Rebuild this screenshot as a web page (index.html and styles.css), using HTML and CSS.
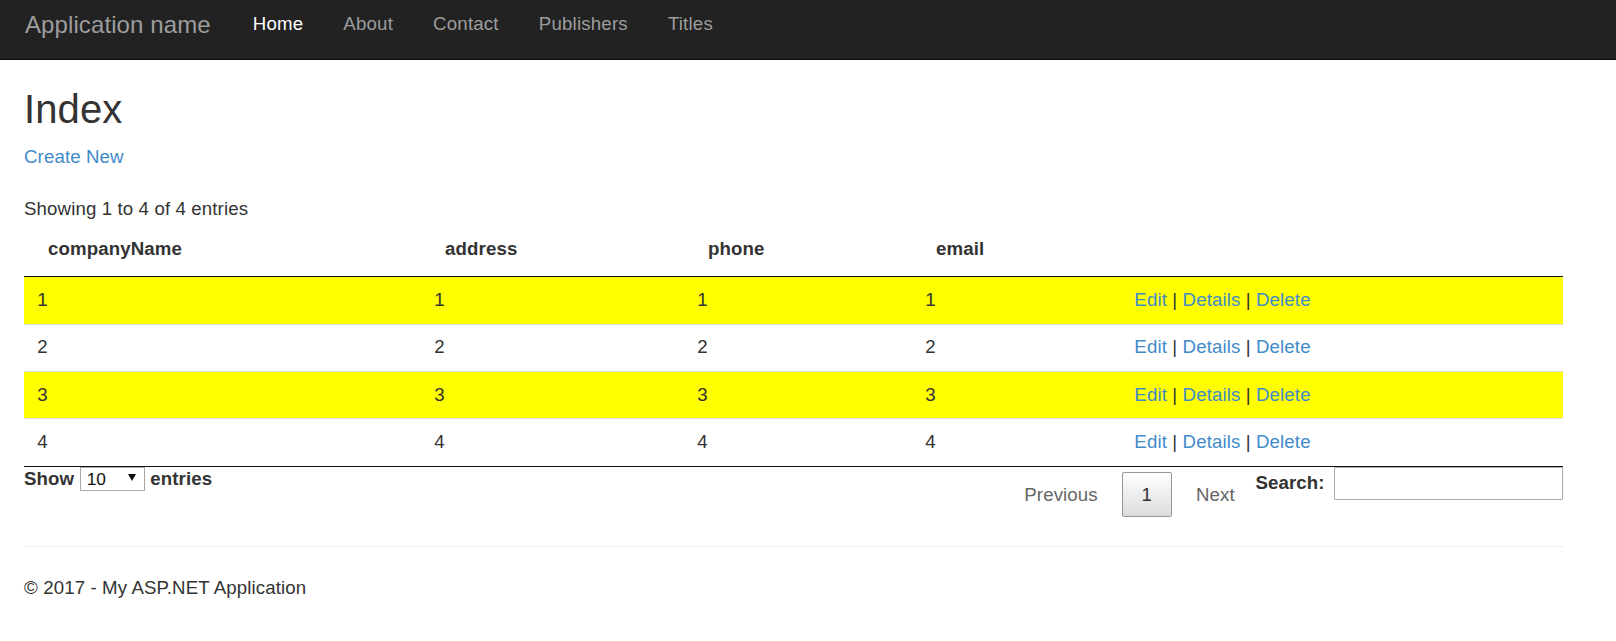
FILE: index.html
```html
<!DOCTYPE html>
<html lang="en">
<head>
<meta charset="utf-8">
<title>Index - My ASP.NET Application</title>
<link rel="stylesheet" href="styles.css">
</head>
<body>
<header class="navbar">
  <div class="navbar-inner">
    <a class="brand" href="#">Application name</a>
    <ul class="nav">
      <li><a class="nav-link active" href="#">Home</a></li>
      <li><a class="nav-link" href="#">About</a></li>
      <li><a class="nav-link" href="#">Contact</a></li>
      <li><a class="nav-link" href="#">Publishers</a></li>
      <li><a class="nav-link" href="#">Titles</a></li>
    </ul>
  </div>
</header>

<main class="container">
  <h2 class="page-title">Index</h2>
  <p class="create"><a href="#">Create New</a></p>

  <div class="dt-wrapper">
    <div class="dt-info">Showing 1 to 4 of 4 entries</div>
    <table class="dt-table">
      <thead>
        <tr>
          <th class="c1">companyName</th>
          <th class="c2">address</th>
          <th class="c3">phone</th>
          <th class="c4">email</th>
          <th class="c5"></th>
        </tr>
      </thead>
      <tbody>
        <tr class="odd">
          <td>1</td><td>1</td><td>1</td><td>1</td>
          <td><a href="#">Edit</a> | <a href="#">Details</a> | <a href="#">Delete</a></td>
        </tr>
        <tr class="even">
          <td>2</td><td>2</td><td>2</td><td>2</td>
          <td><a href="#">Edit</a> | <a href="#">Details</a> | <a href="#">Delete</a></td>
        </tr>
        <tr class="odd">
          <td>3</td><td>3</td><td>3</td><td>3</td>
          <td><a href="#">Edit</a> | <a href="#">Details</a> | <a href="#">Delete</a></td>
        </tr>
        <tr class="even">
          <td>4</td><td>4</td><td>4</td><td>4</td>
          <td><a href="#">Edit</a> | <a href="#">Details</a> | <a href="#">Delete</a></td>
        </tr>
      </tbody>
    </table>

    <div class="dt-bottom">
      <label class="dt-length">
        <span>Show</span>
        <span class="select-wrap">
          <select class="len-select"><option>10</option><option>25</option><option>50</option><option>100</option></select>
          <svg class="caret" width="8" height="7" viewBox="0 0 8 7"><path d="M0 0 L8 0 L4 7 Z" fill="#111"/></svg>
        </span>
        <span>entries</span>
      </label>
      <div class="dt-right">
        <div class="dt-paginate">
          <a class="pg-btn disabled" href="#">Previous</a>
          <a class="pg-btn current" href="#">1</a>
          <a class="pg-btn disabled" href="#">Next</a>
        </div>
        <label class="dt-filter">
          <span>Search:</span>
          <input class="search-input" type="search">
        </label>
      </div>
    </div>
  </div>

  <hr class="rule">
  <footer class="footer">
    <p>&copy; 2017 - My ASP.NET Application</p>
  </footer>
</main>
</body>
</html>
```

FILE: styles.css
```css
* {
  box-sizing: border-box;
}

html, body {
  margin: 0;
  padding: 0;
}

body {
  font-family: "Liberation Sans", Arial, Helvetica, sans-serif;
  font-size: 18.67px;
  line-height: 26.67px;
  letter-spacing: 0.12px;
  color: #333;
  background: #fff;
}

a {
  color: #428bca;
  text-decoration: none;
}

/* Navbar */
.navbar {
  height: 60px;
  background: #222;
  border-bottom: 1px solid #080808;
}

.navbar-inner {
  display: flex;
  align-items: flex-start;
  padding-left: 25px;
}

.brand {
  color: #9d9d9d;
  font-size: 24px;
  line-height: 26.67px;
  letter-spacing: 0.1px;
  margin-top: 12px;
  margin-right: 22px;
}

.nav {
  display: flex;
  list-style: none;
  margin: 0;
  padding: 0;
}

.nav-link {
  display: block;
  color: #9d9d9d;
  padding: 11px 20px 0;
  line-height: 26.67px;
  letter-spacing: 0.2px;
}

.nav-link.active {
  color: #fff;
}

/* Container */
.container {
  width: 1539px;
  margin-left: 24px;
}

.page-title {
  font-size: 40px;
  font-weight: normal;
  line-height: 44px;
  margin: 26.67px 0 13.33px;
}

.create {
  margin: 0 0 13.33px;
}

/* DataTable */
.dt-info {
  padding-top: 12.2px;
}

.dt-table {
  width: 1539px;
  table-layout: fixed;
  border-collapse: separate;
  border-spacing: 0;
  border-bottom: 1px solid #111;
}

.dt-table th {
  text-align: left;
  font-weight: bold;
  padding: 13.33px 24px;
  border-bottom: 1px solid #111;
  white-space: nowrap;
}

.dt-table .c1 { width: 397px; }
.dt-table .c2 { width: 263px; }
.dt-table .c3 { width: 228px; }
.dt-table .c4 { width: 209px; }
.dt-table .c5 { width: 442px; }

.dt-table td {
  padding: 9.85px 13.33px;
  border-top: 1px solid #ddd;
}

.dt-table tbody tr:first-child td {
  border-top: none;
}

.dt-table tr.odd td {
  background: #ffff00;
}

.dt-table tr.even td {
  background: #fff;
}

/* Bottom controls */
.dt-bottom {
  display: flex;
  justify-content: space-between;
  align-items: flex-start;
}

.dt-length {
  display: flex;
  align-items: center;
  gap: 5.5px;
  font-weight: bold;
  height: 26.67px;
  margin-top: -1px;
}

.select-wrap {
  position: relative;
  display: inline-block;
  height: 24px;
}

.len-select {
  -webkit-appearance: none;
  appearance: none;
  display: block;
  width: 65px;
  height: 24px;
  margin: 0;
  padding: 0 0 0 6px;
  border: 1px solid #a9a9a9;
  border-radius: 0;
  background: #fff;
  font-family: "Liberation Sans", Arial, sans-serif;
  font-size: 17.33px;
  font-weight: normal;
  color: #111;
  line-height: 22px;
}

.caret {
  position: absolute;
  left: 48px;
  top: 7.5px;
  pointer-events: none;
}

.dt-right {
  display: flex;
  align-items: flex-start;
}

.dt-paginate {
  display: flex;
  padding-top: 5.7px;
}

.pg-btn {
  display: block;
  padding: 9.33px 18.67px;
  line-height: 24.5px;
  border: 1px solid transparent;
  border-radius: 2px;
  color: #666;
  margin-left: 4.5px;
}

.pg-btn:first-child {
  margin-left: 0;
}

.pg-btn.current {
  color: #333;
  border-color: #979797;
  background: linear-gradient(to bottom, #fff 0%, #dcdcdc 100%);
}

.dt-filter {
  display: flex;
  align-items: center;
  font-weight: bold;
  height: 33px;
  margin-left: 1px;
}

.search-input {
  width: 229px;
  height: 33px;
  margin: 0 0 0 9.3px;
  border: 1px solid #aaa;
  border-radius: 1px;
  padding: 4px 6px;
  font-family: "Liberation Sans", Arial, sans-serif;
  font-size: 17.33px;
  background: #fff;
}

/* Footer */
.rule {
  margin: 29px 0 27.5px;
  border: 0;
  border-top: 1px solid #eee;
  height: 0;
}

.footer p {
  margin: 0 0 13.33px;
}
```
